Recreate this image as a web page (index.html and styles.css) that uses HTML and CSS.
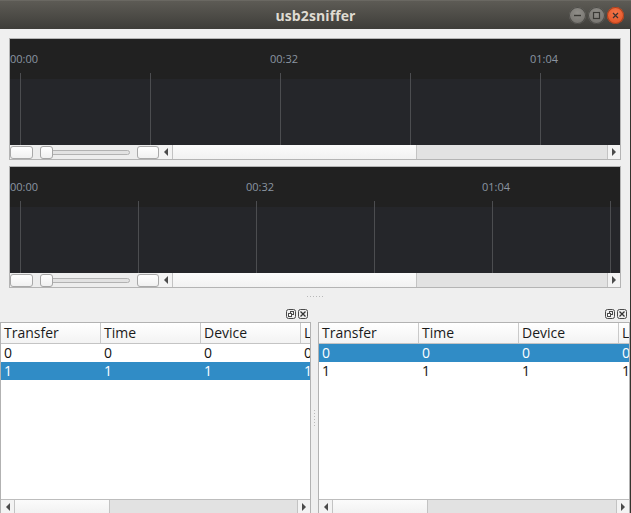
FILE: index.html
```html
<!DOCTYPE html>
<html>
<head>
<meta charset="utf-8">
<title>usb2sniffer</title>
<link rel="stylesheet" href="styles.css">
</head>
<body>
<div class="window">
  <header class="titlebar">
    <span class="title">usb2sniffer</span>
    <div class="wm-buttons">
      <span class="wm-btn"><svg width="17" height="17" viewBox="0 0 17 17"><line x1="5" y1="8.5" x2="12" y2="8.5" stroke="#3a3935" stroke-width="1.4"/></svg></span>
      <span class="wm-btn"><svg width="17" height="17" viewBox="0 0 17 17"><rect x="5.5" y="5.5" width="6" height="6" fill="none" stroke="#3a3935" stroke-width="1.2"/></svg></span>
      <span class="wm-btn wm-close"><svg width="17" height="17" viewBox="0 0 17 17"><path d="M6 6 L11 11 M11 6 L6 11" stroke="#3a3230" stroke-width="1.2"/></svg></span>
    </div>
  </header>
  <div class="content">
    <main class="timelines">
      <section class="timeline">
        <div class="track">
          <span class="tick" style="left:10px"></span>
          <span class="tick" style="left:140px"></span>
          <span class="tick" style="left:270px"></span>
          <span class="tick" style="left:400px"></span>
          <span class="tick" style="left:530px"></span>
          <span class="stamp" style="left:0px">00:00</span>
          <span class="stamp" style="left:260px">00:32</span>
          <span class="stamp" style="left:520px">01:04</span>
        </div>
        <div class="controls">
          <span class="ctl-btn"></span>
          <span class="slider"><span class="groove"></span><span class="handle"></span></span>
          <span class="ctl-btn ctl-btn-2"></span>
          <div class="hscroll">
            <span class="arrow"><span class="tri-left"></span></span>
            <span class="thumb thumb-wide"></span>
            <span class="trough"></span>
            <span class="arrow arrow-right"><span class="tri-right"></span></span>
          </div>
        </div>
      </section>
      <section class="timeline">
        <div class="track">
          <span class="tick" style="left:10px"></span>
          <span class="tick" style="left:128px"></span>
          <span class="tick" style="left:246px"></span>
          <span class="tick" style="left:364px"></span>
          <span class="tick" style="left:482px"></span>
          <span class="tick" style="left:600px"></span>
          <span class="stamp" style="left:0px">00:00</span>
          <span class="stamp" style="left:236px">00:32</span>
          <span class="stamp" style="left:472px">01:04</span>
        </div>
        <div class="controls">
          <span class="ctl-btn"></span>
          <span class="slider"><span class="groove"></span><span class="handle"></span></span>
          <span class="ctl-btn ctl-btn-2"></span>
          <div class="hscroll">
            <span class="arrow"><span class="tri-left"></span></span>
            <span class="thumb thumb-wide"></span>
            <span class="trough"></span>
            <span class="arrow arrow-right"><span class="tri-right"></span></span>
          </div>
        </div>
      </section>
    </main>
    <div class="hsplit"><span class="dots-h"></span></div>
    <div class="docks">
      <section class="dock dock-left">
        <div class="dock-title">
          <span class="dock-btn"><svg width="12" height="10" viewBox="0 0 12 10"><rect x="1.5" y="0.5" width="9" height="9" rx="2" fill="none" stroke="#4a4a4a"/><rect x="5.5" y="2.5" width="3" height="3" fill="none" stroke="#4a4a4a"/><rect x="3.5" y="4.5" width="3" height="3" fill="#fff" stroke="#4a4a4a"/></svg></span>
          <span class="dock-btn"><svg width="12" height="10" viewBox="0 0 12 10"><rect x="1.5" y="0.5" width="9" height="9" rx="2" fill="none" stroke="#4a4a4a"/><path d="M3.5 2.5 L8.5 7.5 M8.5 2.5 L3.5 7.5" stroke="#333" stroke-width="1.3"/></svg></span>
        </div>
        <div class="table">
          <div class="thead">
            <span class="th">Transfer</span><span class="th">Time</span><span class="th">Device</span><span class="th th-last">L</span>
          </div>
          <div class="tbody">
            <div class="row"><span class="td">0</span><span class="td">0</span><span class="td">0</span><span class="td">0</span></div>
            <div class="row selected"><span class="td">1</span><span class="td">1</span><span class="td">1</span><span class="td">1</span></div>
          </div>
          <div class="hscroll tscroll">
            <span class="arrow"><span class="tri-left"></span></span>
            <span class="thumb thumb-table"></span>
            <span class="trough"></span>
            <span class="arrow arrow-right"><span class="tri-right"></span></span>
          </div>
        </div>
      </section>
      <div class="vsplit"><span class="dots-v"></span></div>
      <section class="dock dock-right">
        <div class="dock-title">
          <span class="dock-btn"><svg width="12" height="10" viewBox="0 0 12 10"><rect x="1.5" y="0.5" width="9" height="9" rx="2" fill="none" stroke="#4a4a4a"/><rect x="5.5" y="2.5" width="3" height="3" fill="none" stroke="#4a4a4a"/><rect x="3.5" y="4.5" width="3" height="3" fill="#fff" stroke="#4a4a4a"/></svg></span>
          <span class="dock-btn"><svg width="12" height="10" viewBox="0 0 12 10"><rect x="1.5" y="0.5" width="9" height="9" rx="2" fill="none" stroke="#4a4a4a"/><path d="M3.5 2.5 L8.5 7.5 M8.5 2.5 L3.5 7.5" stroke="#333" stroke-width="1.3"/></svg></span>
        </div>
        <div class="table">
          <div class="thead">
            <span class="th">Transfer</span><span class="th">Time</span><span class="th">Device</span><span class="th th-last">L</span>
          </div>
          <div class="tbody">
            <div class="row selected"><span class="td">0</span><span class="td">0</span><span class="td">0</span><span class="td">0</span></div>
            <div class="row"><span class="td">1</span><span class="td">1</span><span class="td">1</span><span class="td">1</span></div>
          </div>
          <div class="hscroll tscroll">
            <span class="arrow"><span class="tri-left"></span></span>
            <span class="thumb thumb-table"></span>
            <span class="trough"></span>
            <span class="arrow arrow-right"><span class="tri-right"></span></span>
          </div>
        </div>
      </section>
    </div>
  </div>
</div>
</body>
</html>
```
FILE: styles.css
```css
* { box-sizing: border-box; }
html, body { margin: 0; padding: 0; }
body {
  width: 631px;
  height: 513px;
  overflow: hidden;
  background: #efefef;
  font-family: "Open Sans", "DejaVu Sans", sans-serif;
}
.window {
  width: 631px;
  height: 513px;
  display: flex;
  flex-direction: column;
}
.titlebar {
  height: 29px;
  flex: none;
  display: grid;
  grid-template-columns: 1fr auto 1fr;
  align-items: center;
  background: linear-gradient(#5d5b55, #3e3d39);
  border-top: 1px solid #6a6862;
}
.title {
  grid-column: 2;
  color: #dfdbd2;
  font-weight: 700;
  font-size: 14px;
  letter-spacing: 0.1px;
}
.wm-buttons {
  grid-column: 3;
  justify-self: end;
  display: flex;
  gap: 2px;
  padding-right: 7px;
}
.wm-btn {
  width: 17px;
  height: 17px;
  border-radius: 50%;
  background: radial-gradient(circle at 50% 35%, #908e89, #6e6c67);
  box-shadow: inset 0 0 0 1px #4d4c48;
  display: block;
}
.wm-btn svg { display: block; }
.wm-close {
  background: radial-gradient(circle at 50% 35%, #f4764a, #de4b1c);
  box-shadow: inset 0 0 0 1px #a8401e;
}
.content {
  flex: 1;
  display: flex;
  flex-direction: column;
  border-right: 1px solid #35342f;
  min-height: 0;
}
.timelines {
  display: flex;
  flex-direction: column;
  gap: 6px;
  padding: 9px 9px 0 9px;
}
.timeline {
  border: 1px solid #b4b4b4;
  background: #ededed;
}
.track {
  position: relative;
  height: 106px;
  background: linear-gradient(#212121 0 40px, #25262a 40px);
  overflow: hidden;
}
.tick {
  position: absolute;
  top: 34px;
  bottom: 0;
  width: 1px;
  background: #4c4d50;
}
.stamp {
  position: absolute;
  top: 13px;
  font-size: 11px;
  line-height: 14px;
  color: #8b95a1;
}
.controls {
  height: 14px;
  display: flex;
  align-items: center;
  background: #ededed;
}
.ctl-btn {
  width: 23px;
  height: 13px;
  border: 1px solid #a9a9a9;
  border-radius: 3px;
  background: linear-gradient(#ffffff, #f1f1f1);
}
.ctl-btn-2 { width: 22px; margin-left: 7px; }
.slider {
  position: relative;
  width: 90px;
  height: 13px;
  margin-left: 7px;
  display: flex;
  align-items: center;
}
.groove {
  flex: 1;
  height: 5px;
  border: 1px solid #b2b2b2;
  border-radius: 3px;
  background: #e2e2e2;
}
.handle {
  position: absolute;
  left: 0;
  top: 0;
  width: 13px;
  height: 13px;
  border: 1px solid #a5a5a5;
  border-radius: 3px;
  background: linear-gradient(#ffffff, #f0f0f0);
}
.hscroll {
  flex: 1;
  height: 14px;
  display: flex;
  align-self: stretch;
}
.arrow {
  width: 14px;
  flex: none;
  display: flex;
  align-items: center;
  justify-content: center;
  border-right: 1px solid #c3c3c3;
  background: #f3f3f3;
}
.arrow-right {
  border-right: none;
  border-left: 1px solid #c3c3c3;
  width: 13px;
}
.tri-left {
  width: 0;
  height: 0;
  border-top: 4px solid transparent;
  border-bottom: 4px solid transparent;
  border-right: 4px solid #4b4b4b;
}
.tri-right {
  width: 0;
  height: 0;
  border-top: 4px solid transparent;
  border-bottom: 4px solid transparent;
  border-left: 4px solid #4b4b4b;
}
.thumb {
  flex: none;
  background: linear-gradient(#fbfbfb, #f2f2f2);
  border-right: 1px solid #c3c3c3;
}
.thumb-wide { width: 244px; }
.thumb-table { width: 95px; }
.trough {
  flex: 1;
  background: #e2e2e2;
}
.hsplit {
  height: 17px;
  flex: none;
  display: flex;
  justify-content: center;
  align-items: center;
}
.dots-h {
  width: 16px;
  height: 1px;
  background: repeating-linear-gradient(90deg, #b9b9b9 0 1px, transparent 1px 3px);
}
.docks {
  flex: 1;
  display: flex;
  min-height: 0;
}
.dock {
  display: flex;
  flex-direction: column;
  min-width: 0;
}
.dock-left { width: 311px; flex: none; }
.dock-right { flex: 1; }
.dock-title {
  height: 17px;
  flex: none;
  display: flex;
  justify-content: flex-end;
  align-items: center;
  padding-right: 2px;
}
.dock-btn { width: 12px; height: 10px; display: block; }
.dock-btn svg { display: block; }
.vsplit {
  width: 7px;
  flex: none;
  display: flex;
  align-items: center;
  justify-content: center;
  padding-top: 17px;
}
.dots-v {
  width: 1px;
  height: 16px;
  background: repeating-linear-gradient(180deg, #b9b9b9 0 1px, transparent 1px 3px);
}
.table {
  flex: 1;
  display: flex;
  flex-direction: column;
  border: 1px solid #b2b2b2;
  border-bottom: none;
  background: #ffffff;
  overflow: hidden;
  min-height: 0;
}
.thead {
  height: 21px;
  flex: none;
  display: grid;
  grid-template-columns: 100px 100px 100px 1fr;
  background: linear-gradient(#ffffff, #f3f3f3);
  border-bottom: 1px solid #c4c4c4;
}
.th {
  border-right: 1px solid #cacaca;
  padding-left: 3px;
  font-size: 14px;
  line-height: 20px;
  color: #1a1a1a;
  white-space: nowrap;
  overflow: hidden;
}
.th-last { border-right: none; }
.tbody { flex: 1; }
.row {
  height: 18px;
  display: grid;
  grid-template-columns: 100px 100px 100px 1fr;
}
.td {
  padding-left: 3px;
  font-size: 14px;
  line-height: 18px;
  color: #111111;
  overflow: hidden;
}
.selected { background: #308cc6; }
.selected .td { color: #ffffff; }
.tscroll {
  flex: none;
  border-top: 1px solid #bdbdbd;
  background: #efefef;
}
```
